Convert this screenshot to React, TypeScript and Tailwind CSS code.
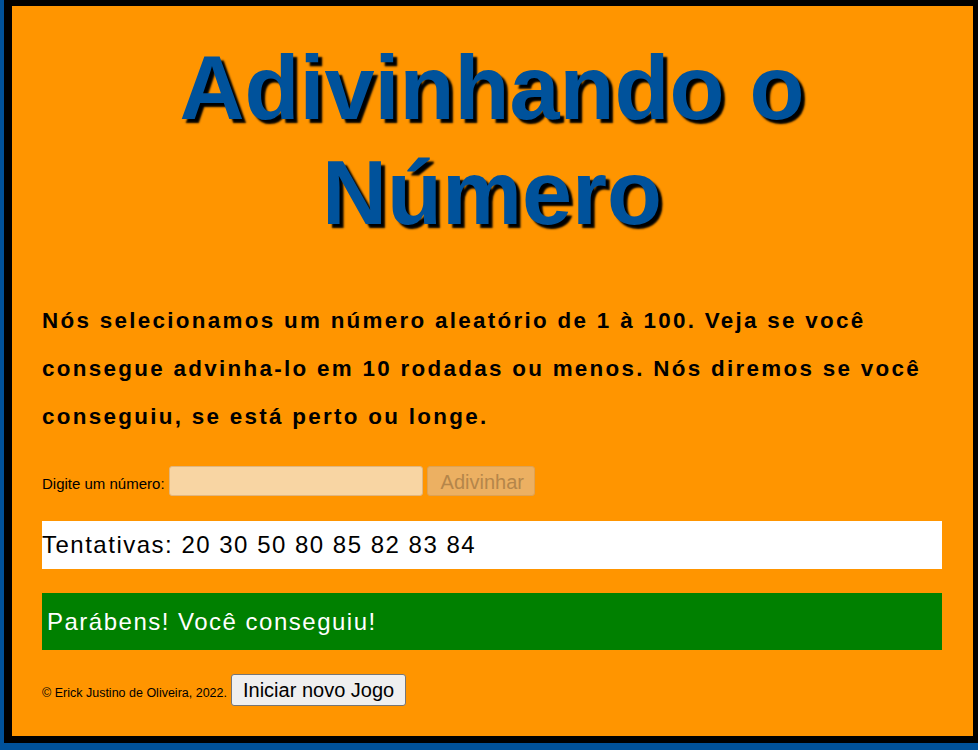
export default function App() {
  const guesses = [20, 30, 50, 80, 85, 82, 83, 84]

  return (
    <div className="min-h-screen bg-[#00529b] pl-[4px] pb-[7px] font-['Liberation_Sans',Arial,sans-serif]">
      <div className="border-black border-t-[6px] border-l-[8px] border-r-[5px] border-b-[7px] bg-[#ff9500] pb-[30px]">
        <div className="w-[900px] ml-[30px]">
          <h1 className="mt-[30px] text-center text-[90px] leading-[105px] font-bold text-[#00529b] [text-shadow:4px_4px_2px_#000]">
            Adivinhando o Número
          </h1>

          <p className="mt-[51px] text-[22.4px] leading-[48px] font-bold tracking-[2.3px] text-black">
            Nós selecionamos um número aleatório de 1 à 100. Veja se você consegue advinha-lo em 10 rodadas ou menos. Nós diremos se você conseguiu, se está perto ou longe.
          </p>

          <div className="mt-[25px] flex items-center">
            <label htmlFor="guess" className="text-[15px] text-black mt-[6px] mr-[4px]">
              Digite um número:
            </label>
            <input
              id="guess"
              type="number"
              disabled
              className="w-[254px] h-[30px] rounded-[3px] border border-[#e0b680] bg-[#f8d5a3] outline-none"
            />
            <button
              disabled
              className="ml-[4px] h-[30px] pl-[13px] pr-[10px] rounded-[3px] border border-[#dda255] bg-[#ecb062] text-[20px] text-[#b5864a]"
            >
              Adivinhar
            </button>
          </div>

          <div className="mt-[25px] h-[48px] bg-white flex items-center text-[24px] tracking-[1.5px] text-black">
            Tentativas: {guesses.join(' ')}
          </div>

          <div className="mt-[24px] h-[57px] bg-[#008000] flex items-center px-[5px] text-[24px] tracking-[1.5px] text-white">
            Parábens! Você conseguiu!
          </div>

          <div className="mt-[24px] flex items-center">
            <span className="text-[12.5px] text-black mt-[6px] mr-[4px]">© Erick Justino de Oliveira, 2022.</span>
            <button className="h-[32px] px-[11px] rounded-[3px] border border-[#767676] bg-[#efefef] text-[20px] text-black">
              Iniciar novo Jogo
            </button>
          </div>
        </div>
      </div>
    </div>
  )
}
